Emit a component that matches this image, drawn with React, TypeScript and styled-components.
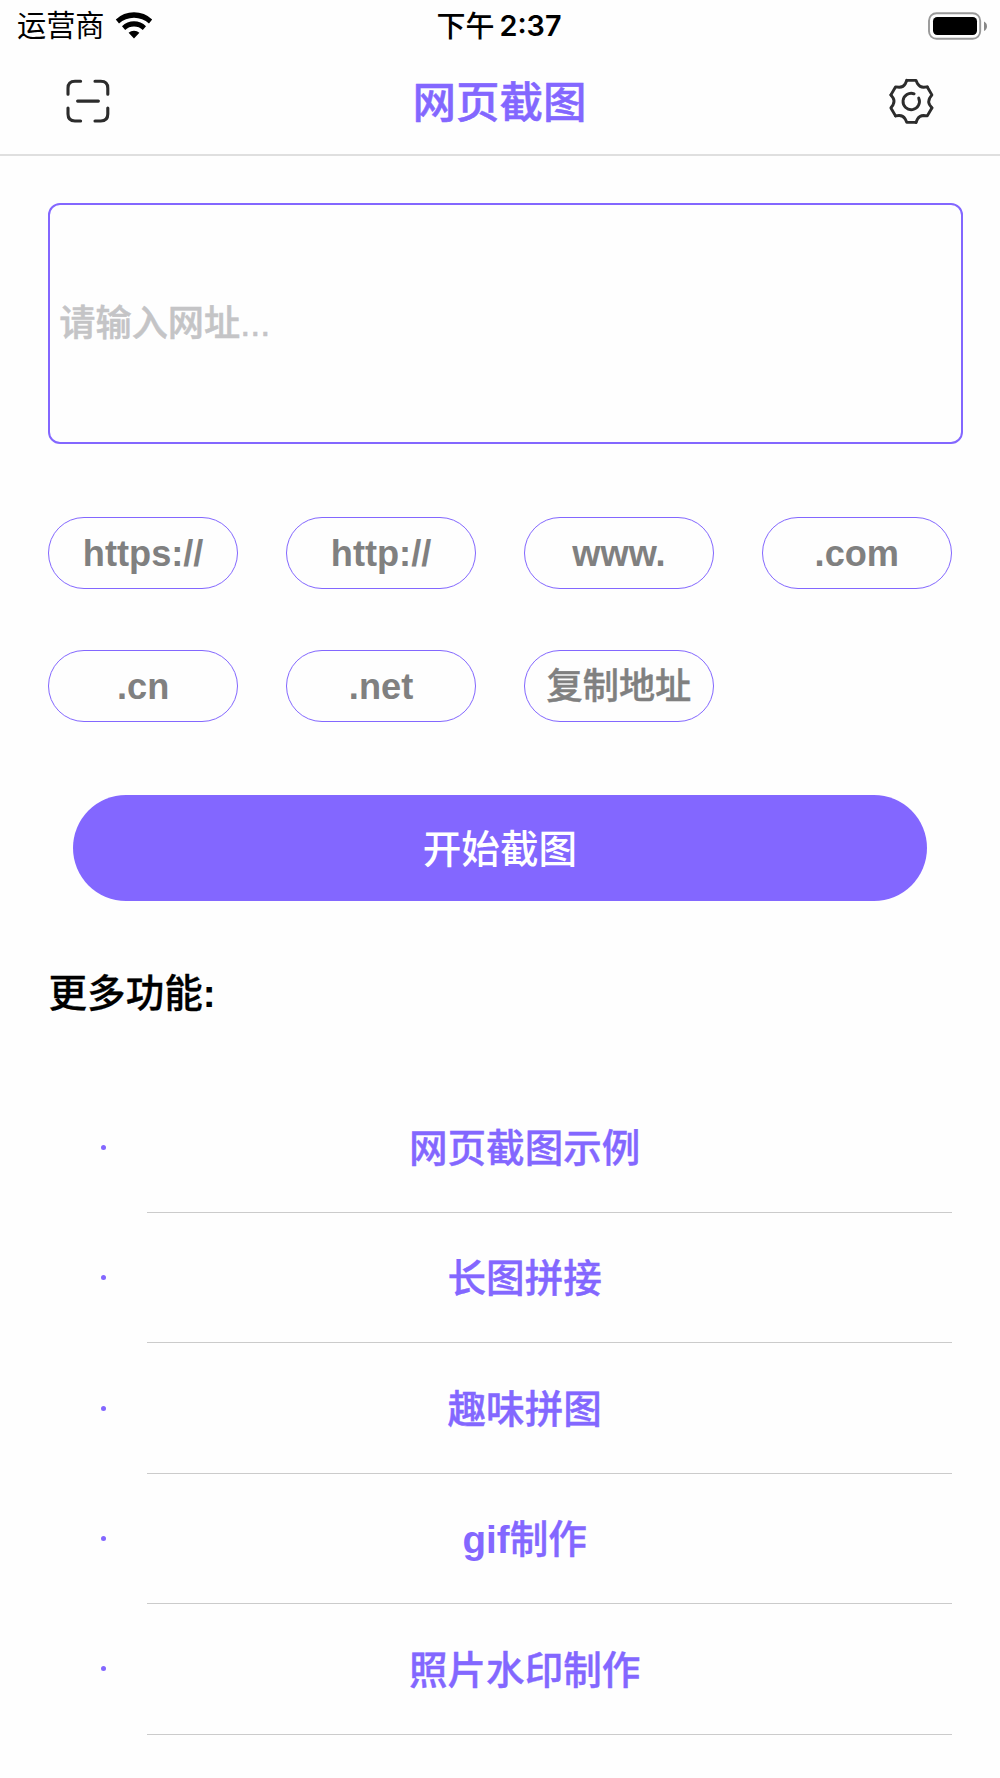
import React from "react";
import styled, { createGlobalStyle } from "styled-components";

const violet = "#8367ff";
const sans = '"Liberation Sans", "Noto Sans CJK SC", sans-serif';

const GlobalStyle = createGlobalStyle`
  * { box-sizing: border-box; }
  body { margin: 0; background: #fefefe; }
`;

const Screen = styled.main`
  width: 1000px;
  height: 1778px;
  overflow: hidden;
  display: flex;
  flex-direction: column;
  background: #fefefe;
  font-family: ${sans};
`;

const StatusBar = styled.div`
  height: 48px;
  flex: none;
  display: grid;
  grid-template-columns: 1fr auto 1fr;
  align-items: center;
  padding: 0 13px 0 17px;
  color: #000;
`;

const Carrier = styled.div`
  display: flex;
  align-items: center;
  gap: 10px;
  font-size: 29.2px;
  line-height: 48px;
  svg { display: block; margin-bottom: 1px; }
`;

const CarrierName = styled.span`
  height: 47px;
`;

const Clock = styled.div`
  display: flex;
  gap: 5px;
  margin-right: 6px;
  font: 500 29px/48px "Noto Sans CJK SC", sans-serif;
`;

const ClockDigits = styled.span`
  font: 600 28.8px/51px Inter, sans-serif;
`;

const BatteryIcon = styled.svg`
  justify-self: end;
  display: block;
`;

const NavBar = styled.header`
  height: 108px;
  flex: none;
  display: flex;
  align-items: center;
  justify-content: space-between;
  padding: 0 66px 0 65px;
  border-bottom: 2px solid #dfdfdf;
`;

const Title = styled.h1`
  margin: 0;
  padding-top: 4px;
  color: ${violet};
  font-size: 43.5px;
  font-weight: 500;
  line-height: 105px;
  -webkit-text-stroke: 0.5px currentColor;
`;

const IconButton = styled.button`
  width: 46px;
  height: 46px;
  padding: 0;
  border: 0;
  background: none;
  svg { display: block; }
`;

const UrlInput = styled.input`
  width: 915px;
  height: 241px;
  flex: none;
  margin: 47px 0 0 48.3px;
  padding: 0 8px 0 9px;
  border: 2.4px solid ${violet};
  border-radius: 12px;
  background: transparent;
  font: 500 36.2px ${sans};
  outline: none;
  &::placeholder {
    color: #c4c4c6;
    opacity: 1;
    -webkit-text-stroke: 0.5px currentColor;
  }
`;

const Chips = styled.div`
  display: grid;
  grid-template-columns: repeat(4, 189.5px);
  grid-auto-rows: 72.3px;
  column-gap: 48.4px;
  row-gap: 60.6px;
  margin: 73px 0 0 48.4px;
`;

const Chip = styled.button`
  padding: 1px 0 0;
  border: 1px solid ${violet};
  border-radius: 36px;
  background: transparent;
  color: #808080;
  font: 700 36.2px/69px ${sans};
  white-space: nowrap;
`;

const ChipCjk = styled(Chip)`
  font-weight: 500;
  -webkit-text-stroke: 0.4px currentColor;
`;

const StartButton = styled.button`
  width: 854.6px;
  height: 106.4px;
  flex: none;
  margin: 72.4px 0 0 72.6px;
  padding: 3px 0 0;
  border: 0;
  border-radius: 53.2px;
  background: ${violet};
  color: #fff;
  font: 500 38.6px/103px ${sans};
`;

const SectionTitle = styled.h2`
  margin: 63px 0 0 48.5px;
  height: 57px;
  font-size: 38.6px;
  font-weight: 500;
  line-height: 59px;
  color: #000;
  -webkit-text-stroke: 0.3px currentColor;
  b { font-weight: 700; -webkit-text-stroke: 0; }
`;

const List = styled.ul`
  margin: 61.6px 48.4px 0 60px;
  padding: 0;
  list-style: none;
`;

const Row = styled.li`
  height: 130.4px;
  display: grid;
  grid-template-columns: 87.4px 1fr;
`;

const Bullet = styled.span`
  width: 5px;
  height: 5px;
  border-radius: 50%;
  background: ${violet};
  align-self: center;
  justify-self: center;
  margin-bottom: 1px;
`;

const RowLabel = styled.span`
  border-bottom: 1px solid #cbcbcb;
  padding: 2.4px 49.6px 0 0;
  text-align: center;
  color: ${violet};
  font-size: 38.6px;
  font-weight: 500;
  line-height: 127px;
  -webkit-text-stroke: 0.4px currentColor;
  b { font-weight: 700; -webkit-text-stroke: 0; }
`;

const ScanIcon = () => (
  <svg width="46" height="46" viewBox="0 0 46 46" fill="none" stroke="#2c2c2c" strokeWidth="3.1" strokeLinecap="round">
    <path d="M15.6 3.2H10Q3 3.2 3 10.2V16.2M30 3.2H35.8Q42.8 3.2 42.8 10.2V16.2M3 30V36Q3 43 10 43H15.6M42.8 30V36Q42.8 43 35.8 43H30M12.6 23.1H33.4" />
  </svg>
);

// One tooth plus the hollow beside it, repeated every 60 degrees.
const GearIcon = () => (
  <svg width="46" height="46" viewBox="-23.4 -23.4 46 46" fill="none" stroke="#2c2c2c" strokeWidth="2.9" strokeLinecap="round" strokeLinejoin="round">
    {[0, 60, 120, 180, 240, 300].map((angle) => (
      <path
        key={angle}
        transform={`rotate(${angle})`}
        d="M-4.6-21H4.6L6.2-17.6Q8.4-14 12.3-14.1L15.9-14.5"
      />
    ))}
    <path d="M2.7-7.6A8.2 8.2 0 1 0 7.3-3.3" />
  </svg>
);

const WifiIcon = () => (
  <svg width="38" height="28" viewBox="0 0 38 28" fill="#000">
    <path d="M.8 8.6A26 26 0 0 1 37.2 8.6L34 12.6A22 22 0 0 0 4 12.6ZM7 15.2A17 17 0 0 1 31 15.2L27.8 19A13 13 0 0 0 10.2 19ZM13.6 21.8A8 8 0 0 1 24.4 21.8L19 27.4Z" />
  </svg>
);

const chips = ["https://", "http://", "www.", ".com", ".cn", ".net"];

const rows: React.ReactNode[] = [
  "网页截图示例",
  "长图拼接",
  "趣味拼图",
  <><b>gif</b>制作</>,
  "照片水印制作",
];

export default function App() {
  return (
    <Screen>
      <GlobalStyle />
      <StatusBar>
        <Carrier>
          <CarrierName>运营商</CarrierName>
          <WifiIcon />
        </Carrier>
        <Clock>
          下午<ClockDigits>2:37</ClockDigits>
        </Clock>
        <BatteryIcon width="60" height="28" viewBox="0 0 60 28">
          <rect x="2" y="1.2" width="51.2" height="25.6" rx="7.5" fill="none" stroke="#999" strokeWidth="1.9" />
          <rect x="6" y="5" width="44" height="18" rx="4.2" fill="#000" />
          <path d="M57 9.4Q60 11 60 14.2Q60 17.4 57 19Z" fill="#888" />
        </BatteryIcon>
      </StatusBar>
      <NavBar>
        <IconButton aria-label="扫描"><ScanIcon /></IconButton>
        <Title>网页截图</Title>
        <IconButton aria-label="设置"><GearIcon /></IconButton>
      </NavBar>
      <UrlInput placeholder="请输入网址..." />
      <Chips>
        {chips.map((text) => <Chip key={text}>{text}</Chip>)}
        <ChipCjk>复制地址</ChipCjk>
      </Chips>
      <StartButton>开始截图</StartButton>
      <SectionTitle>更多功能<b>:</b></SectionTitle>
      <List>
        {rows.map((label, i) => (
          <Row key={i}>
            <Bullet />
            <RowLabel>{label}</RowLabel>
          </Row>
        ))}
      </List>
    </Screen>
  );
}
